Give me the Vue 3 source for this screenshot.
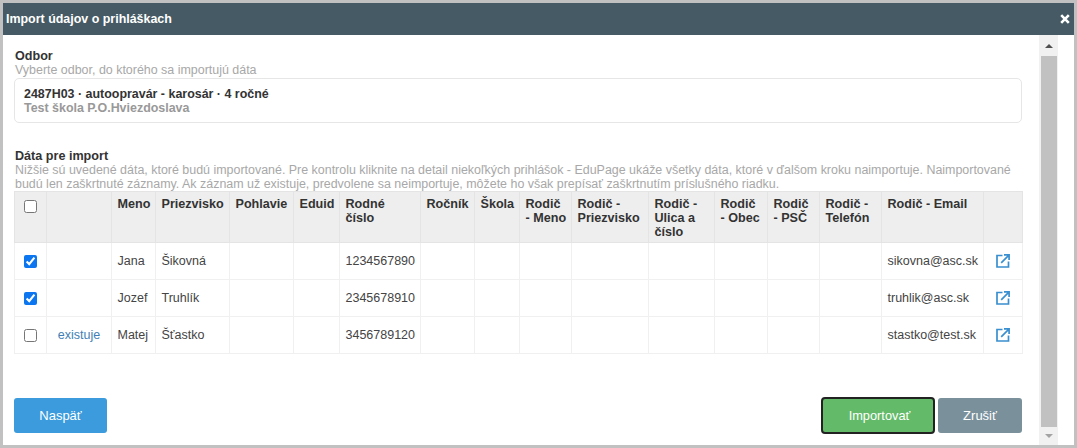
<script setup>
const columns = [
  { lines: [], width: 32 },
  { lines: [], width: 65 },
  { lines: ['Meno'], width: 44 },
  { lines: ['Priezvisko'], width: 74 },
  { lines: ['Pohlavie'], width: 64 },
  { lines: ['Eduid'], width: 46 },
  { lines: ['Rodné', 'číslo'], width: 81 },
  { lines: ['Ročník'], width: 54 },
  { lines: ['Škola'], width: 45 },
  { lines: ['Rodič', '- Meno'], width: 52 },
  { lines: ['Rodič -', 'Priezvisko'], width: 77 },
  { lines: ['Rodič -', 'Ulica a', 'číslo'], width: 66 },
  { lines: ['Rodič', '- Obec'], width: 53 },
  { lines: ['Rodič', '- PSČ'], width: 52 },
  { lines: ['Rodič -', 'Telefón'], width: 62 },
  { lines: ['Rodič - Email'], width: 102 },
  { lines: [], width: 39 },
]

const rows = [
  { id: 1, checked: true, status: '', name: 'Jana', surname: 'Šikovná', idNumber: '1234567890', email: 'sikovna@asc.sk' },
  { id: 2, checked: true, status: '', name: 'Jozef', surname: 'Truhlík', idNumber: '2345678910', email: 'truhlik@asc.sk' },
  { id: 3, checked: false, status: 'existuje', name: 'Matej', surname: 'Šťastko', idNumber: '3456789120', email: 'stastko@test.sk' },
]
</script>

<template>
  <div class="dialog">
    <header class="dialog-head">
      <span class="dialog-title">Import údajov o prihláškach</span>
      <svg class="close" width="10" height="10" viewBox="0 0 10 10">
        <path d="M1.2 1.2 8.8 8.8M8.8 1.2 1.2 8.8" stroke="#fff" stroke-width="2.6" fill="none" />
      </svg>
    </header>

    <div class="dialog-body">
      <main class="content">
        <h3 class="label">Odbor</h3>
        <p class="hint">Vyberte odbor, do ktorého sa importujú dáta</p>
        <div class="field">
          <div class="field-main">2487H03 · autoopravár - karosár · 4 ročné</div>
          <div class="field-sub">Test škola P.O.Hviezdoslava</div>
        </div>

        <h3 class="label second">Dáta pre import</h3>
        <p class="hint">
          Nižšie sú uvedené dáta, ktoré budú importované. Pre kontrolu kliknite na detail niekoľkých prihlášok - EduPage ukáže všetky dáta, ktoré v ďalšom kroku naimportuje. Naimportované budú len zaškrtnuté záznamy. Ak záznam už existuje, predvolene sa neimportuje, môžete ho však prepísať zaškrtnutím príslušného riadku.
        </p>

        <table class="grid">
          <colgroup>
            <col v-for="(col, i) in columns" :key="i" :style="{ width: col.width + 'px' }" />
          </colgroup>
          <thead>
            <tr>
              <th v-for="(col, i) in columns" :key="i">
                <input v-if="i === 0" type="checkbox" class="check" />
                <div v-for="line in col.lines" :key="line">{{ line }}</div>
              </th>
            </tr>
          </thead>
          <tbody>
            <tr v-for="row in rows" :key="row.id">
              <td class="center"><input type="checkbox" class="check" :checked="row.checked" /></td>
              <td class="center"><a v-if="row.status" class="link">{{ row.status }}</a></td>
              <td>{{ row.name }}</td>
              <td>{{ row.surname }}</td>
              <td></td>
              <td></td>
              <td>{{ row.idNumber }}</td>
              <td></td>
              <td></td>
              <td></td>
              <td></td>
              <td></td>
              <td></td>
              <td></td>
              <td></td>
              <td>{{ row.email }}</td>
              <td class="center">
                <svg class="open" width="14" height="14" viewBox="0 0 14 14" fill="none" stroke="#3a8fd0" stroke-width="1.7">
                  <path d="M6.5 1.5H1v11.5h11.5V7.5" />
                  <path d="M5.2 8.8 12.4 1.6M8 .9h5.1V6" />
                </svg>
              </td>
            </tr>
          </tbody>
        </table>

        <footer class="actions">
          <button class="btn back">Naspäť</button>
          <div class="actions-right">
            <button class="btn primary">Importovať</button>
            <button class="btn cancel">Zrušiť</button>
          </div>
        </footer>
      </main>

      <div class="scrollbar">
        <span class="arrow up"></span>
        <div class="thumb"></div>
        <span class="arrow down"></span>
      </div>
    </div>
  </div>
</template>

<style>
html, body {
  margin: 0;
  background: #fff;
}
</style>

<style scoped>
.dialog {
  width: 1077px;
  height: 448px;
  box-sizing: border-box;
  border: 3px solid #c1c1c1;
  display: flex;
  flex-direction: column;
  background: #fff;
  font-family: "Liberation Sans", Arial, sans-serif;
  font-size: 12.5px;
  color: #444;
  overflow: hidden;
}

.dialog-head {
  height: 31px;
  flex: none;
  background: #455a64;
  display: flex;
  align-items: center;
  justify-content: space-between;
  padding: 0 4px 1px 3px;
}

.dialog-title {
  color: #fff;
  font-weight: bold;
  font-size: 12.45px;
}

.dialog-body {
  flex: 1;
  display: flex;
  min-height: 0;
  padding-right: 16px;
}

.content {
  flex: 1;
  min-width: 0;
  padding: 14px 17px 0 12px;
  display: flex;
  flex-direction: column;
}

.label {
  margin: 0;
  font-size: 12.6px;
  line-height: 14px;
  font-weight: bold;
  color: #333;
}

.label.second {
  margin-top: 26px;
}

.hint {
  margin: 0;
  font-size: 12.45px;
  line-height: 14px;
  color: #a8a8a8;
}

.field {
  margin: 1px 0 0 -1px;
  height: 45px;
  box-sizing: border-box;
  border: 1px solid #e6e6e6;
  border-radius: 5px;
  padding: 8px 9px;
  font-weight: bold;
  line-height: 14px;
  font-size: 12.45px;
}

.field-main {
  color: #333;
}

.field-sub {
  color: #999;
}

.grid {
  table-layout: fixed;
  width: 1008px;
  margin-left: -1px;
  border-collapse: collapse;
  border: 1px solid #f0f0f0;
}

th, td {
  border: 1px solid #f0f0f0;
  padding: 0 0 0 5.5px;
  box-sizing: border-box;
  overflow: hidden;
}

th {
  height: 51px;
  background: #eee;
  border-color: #e4e4e4;
  vertical-align: top;
  text-align: left;
  padding-top: 5px;
  font-weight: bold;
  font-size: 12.6px;
  line-height: 14px;
  color: #333;
  white-space: nowrap;
}

td {
  height: 37px;
  white-space: nowrap;
}

td.center,
th:first-child,
th:last-child {
  text-align: center;
  padding-left: 0;
}

th:first-child {
  padding-top: 7px;
}

.check {
  margin: 0;
  width: 13px;
  height: 13px;
  vertical-align: middle;
  accent-color: #0b76ef;
}

.link {
  color: #3f7fb5;
}

.open {
  display: block;
  margin: 0 auto;
}

.actions {
  margin-top: 43px;
  margin-left: -1px;
  display: flex;
  justify-content: space-between;
  align-items: center;
}

.actions-right {
  display: flex;
  align-items: center;
  gap: 3px;
}

.btn {
  height: 35px;
  border: none;
  border-radius: 3px;
  color: #fff;
  font-family: inherit;
  font-size: 13px;
  padding: 0;
}

.back {
  width: 93px;
  background: #3b9bdc;
}

.primary {
  width: 114px;
  height: 37px;
  background: #63ba68;
  border: 2px solid #222;
  border-radius: 4px;
  padding-left: 3px;
  font-size: 12.8px;
}

.cancel {
  width: 84px;
  background: #7a919c;
}

.scrollbar {
  flex: none;
  width: 19px;
  background: #f1f1f1;
  display: flex;
  flex-direction: column;
  align-items: center;
  padding-top: 9px;
  box-sizing: border-box;
}

.thumb {
  flex: 1;
  width: 16px;
  margin: 8px 0 7px;
  background: #c1c1c1;
}

.arrow {
  width: 0;
  height: 0;
  border-left: 4px solid transparent;
  border-right: 4px solid transparent;
  flex: none;
}

.arrow.up {
  border-bottom: 4px solid #505050;
}

.arrow.down {
  border-top: 4px solid #a3a3a3;
  margin-bottom: 7px;
}
</style>
